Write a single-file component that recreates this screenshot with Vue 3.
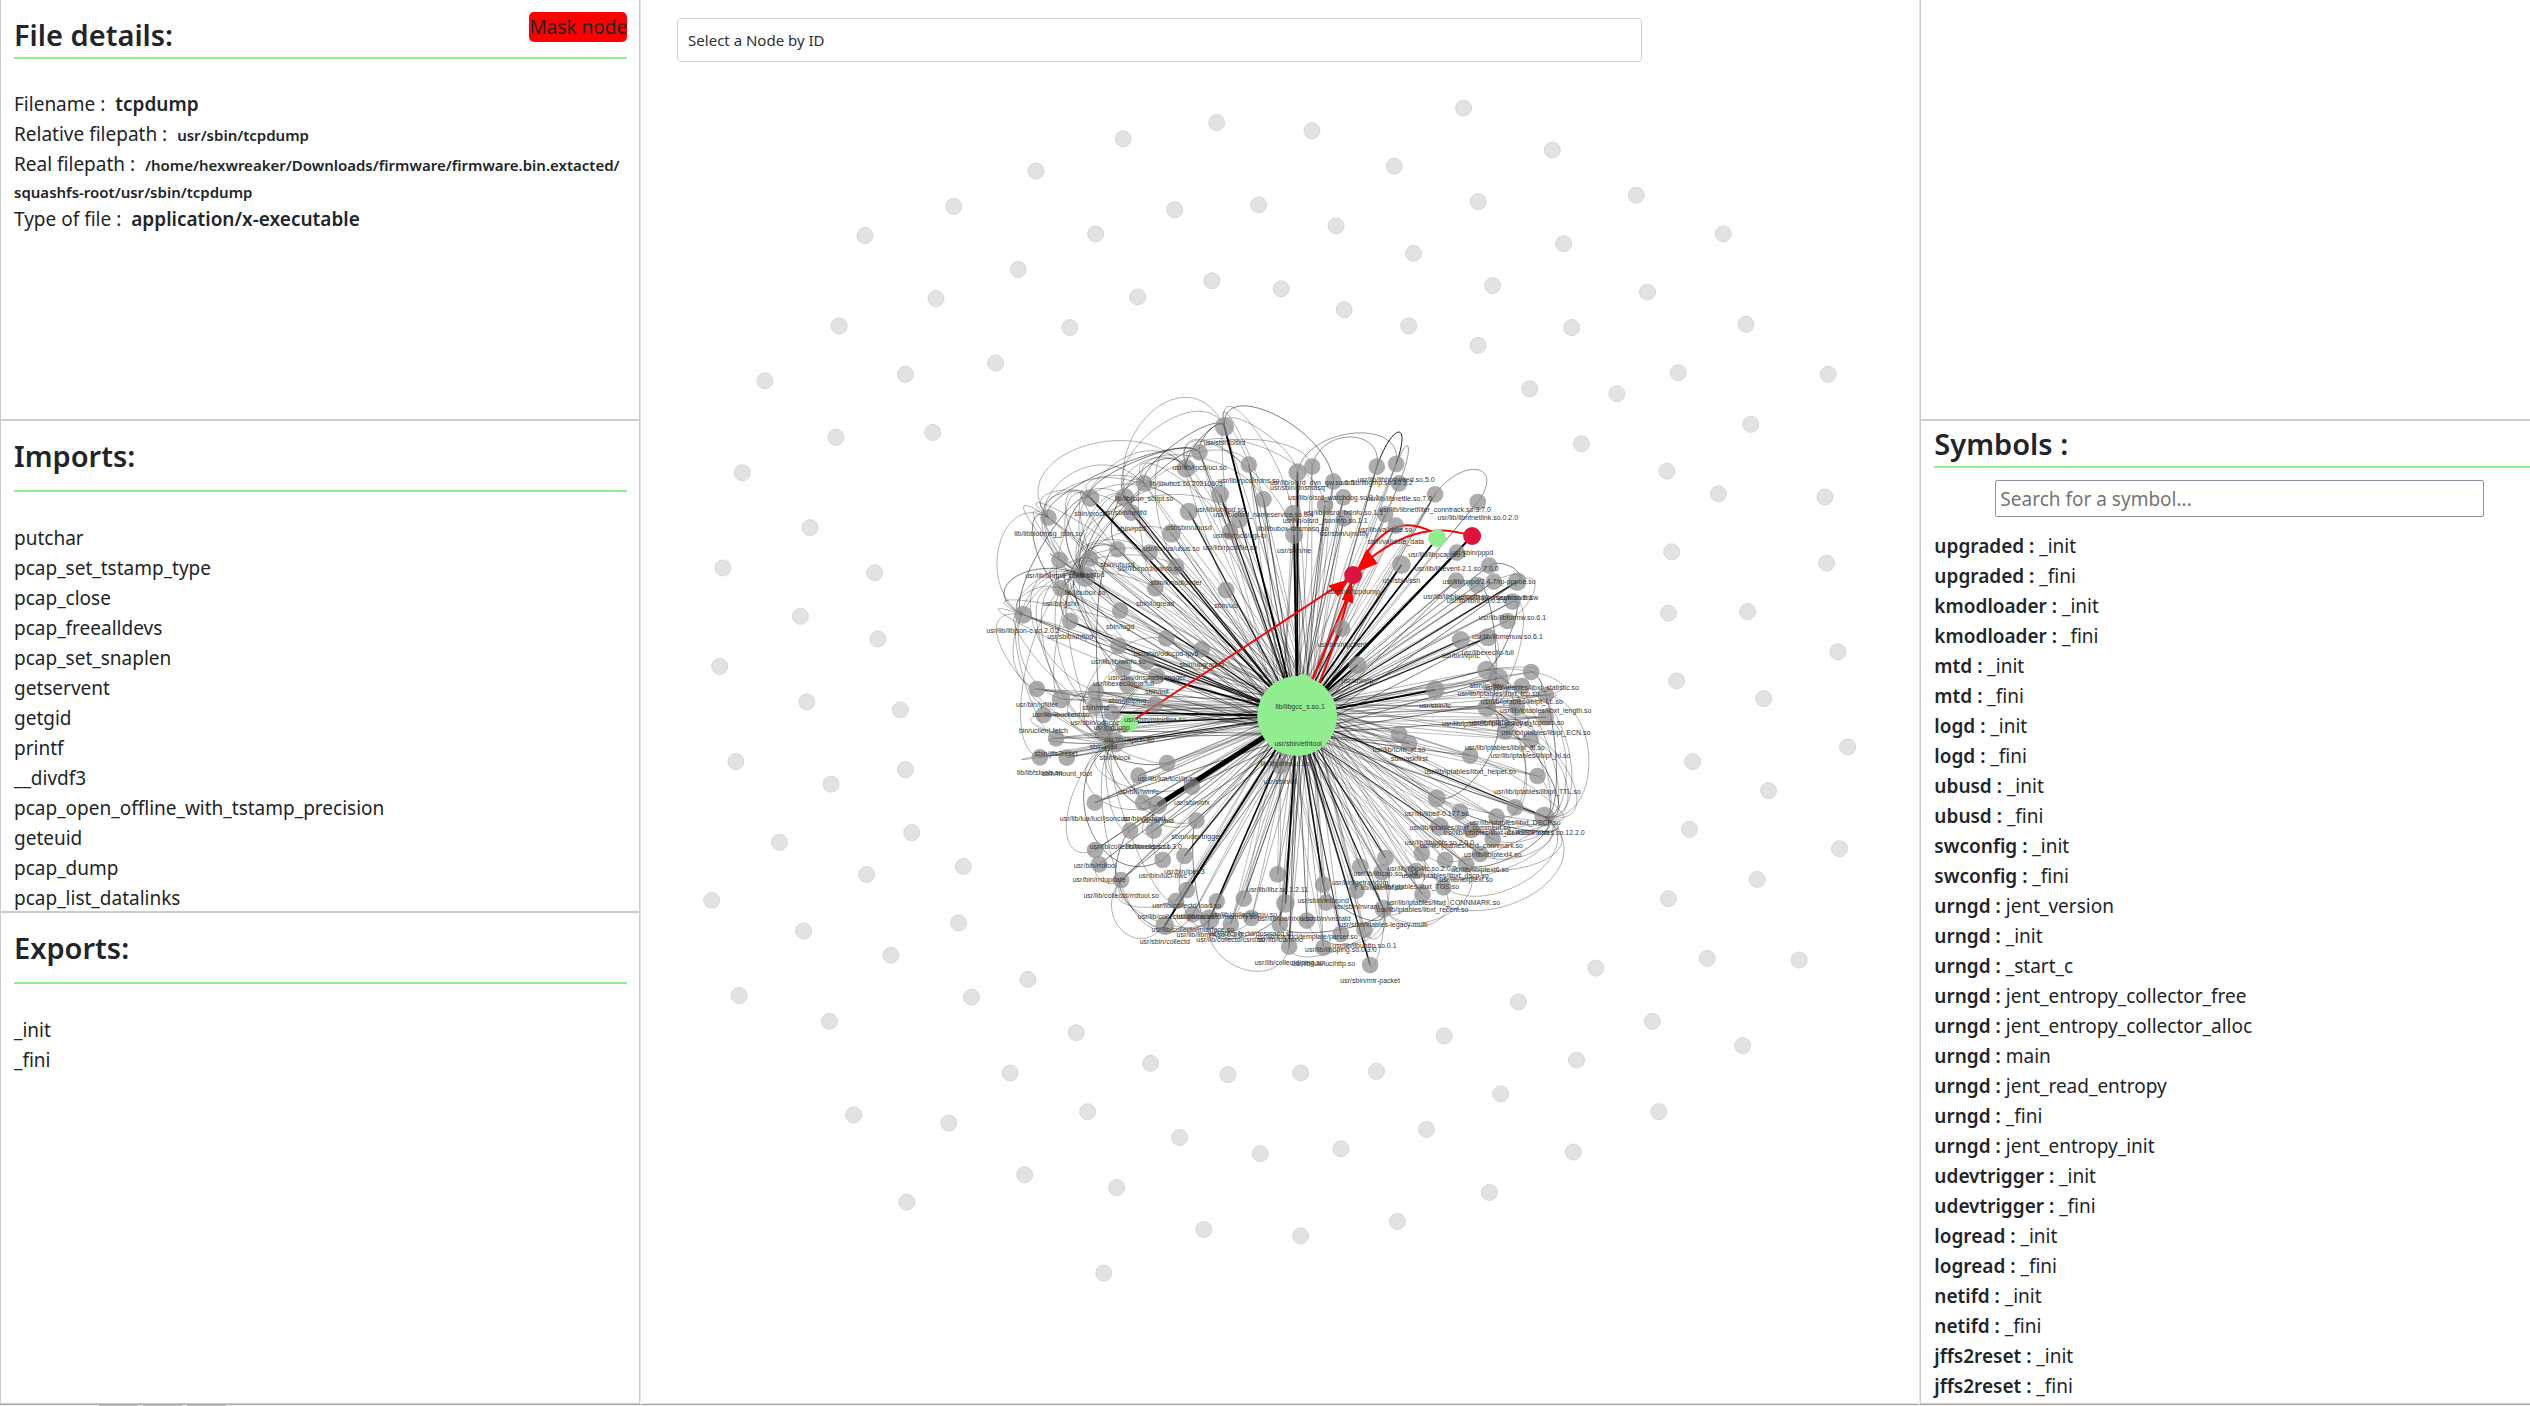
<script setup>
const imports = [
  'putchar', 'pcap_set_tstamp_type', 'pcap_close', 'pcap_freealldevs', 'pcap_set_snaplen',
  'getservent', 'getgid', 'printf', '__divdf3', 'pcap_open_offline_with_tstamp_precision',
  'geteuid', 'pcap_dump', 'pcap_list_datalinks',
]
const exportsList = ['_init', '_fini']

const symbols = [
  ['upgraded', ['_init', '_fini']],
  ['kmodloader', ['_init', '_fini']],
  ['mtd', ['_init', '_fini']],
  ['logd', ['_init', '_fini']],
  ['ubusd', ['_init', '_fini']],
  ['swconfig', ['_init', '_fini']],
  ['urngd', ['jent_version', '_init', '_start_c', 'jent_entropy_collector_free', 'jent_entropy_collector_alloc', 'main', 'jent_read_entropy', '_fini', 'jent_entropy_init']],
  ['udevtrigger', ['_init', '_fini']],
  ['logread', ['_init', '_fini']],
  ['netifd', ['_init', '_fini']],
  ['jffs2reset', ['_init', '_fini']],
].flatMap(([file, names]) => names.map((name) => ({ file, name })))

// Files without any link to the rest of the firmware
const isolated = [
  [754, 76], [696, 86], [813, 81], [907, 67], [962, 93], [864, 103], [642, 106], [591, 128], [536, 146],
  [728, 130], [780, 127], [828, 140], [916, 125], [1014, 121], [1068, 145], [969, 151], [876, 157], [679, 145],
  [631, 167], [580, 185], [751, 174], [705, 184], [794, 179], [833, 192], [925, 177], [1021, 181], [1082, 201],
  [873, 202], [520, 202], [663, 203], [916, 214], [974, 203], [617, 225], [561, 232], [474, 236], [948, 241],
  [1002, 244], [1040, 231], [1133, 232], [1085, 263], [980, 275], [578, 268], [518, 271], [460, 293], [1033, 292],
  [1131, 308], [502, 327], [1065, 306], [1036, 342], [1132, 349], [448, 352], [542, 355], [1034, 380], [1083, 379],
  [496, 382], [446, 413], [544, 396], [1139, 404], [1039, 422], [1093, 433], [500, 435], [558, 440], [1145, 463],
  [1049, 472], [1096, 490], [456, 472], [561, 477], [515, 486], [483, 522], [565, 516], [1047, 514], [1140, 526],
  [537, 542], [597, 537], [441, 558], [498, 577], [1034, 557], [1089, 545], [594, 572], [552, 592], [1058, 594],
  [1115, 595], [989, 600], [637, 607], [458, 617], [514, 633], [602, 618], [941, 621], [1024, 633], [895, 642],
  [667, 640], [1080, 648], [977, 657], [626, 665], [713, 659], [761, 666], [806, 665], [853, 664], [930, 678],
  [1028, 689], [529, 691], [674, 689], [588, 696], [884, 700], [731, 705], [831, 712], [781, 715], [975, 714],
  [635, 728], [692, 736], [562, 745], [923, 739], [866, 757], [746, 762], [806, 766], [684, 789],
].map(([x, y]) => ({ x: x * 1.6135, y: y * 1.6135 }))

// Linked files, grouped by cluster: [x, y, label, edge weight, radius]
const clusters = [
  {
    origin: [980, 390],
    nodes: [
      [733, 110, 'usr/sbin/olsrd', 4, 29], [658, 187, 'usr/lib/rpcd/uci.so', 2], [618, 235, 'lib/libubus.so.20210603', 1, 28],
      [806, 224, 'usr/lib/rpcd/rrdns.so', 1], [492, 280, 'lib/libjson_script.so', 1], [434, 322, 'usr/sbin/netifd', 3, 28],
      [331, 324, 'sbin/procd', 4, 27], [205, 383, 'lib/libblobmsg_json.so', 1], [720, 313, 'usr/lib/uhttpd.so', 3, 27],
      [850, 328, 'usr/lib/olsrd_nameservice.so.0.4', 1], [626, 365, 'usr/sbin/ubusd', 3, 27], [454, 368, 'sbin/rpcd', 3],
      [778, 390, 'usr/lib/rpcd/cgi-io', 2], [750, 425, 'usr/lib/rpcd/file.so', 1], [574, 430, 'usr/lib/lua/ubus.so', 2, 28],
      [412, 478, 'sbin/ubusd', 1], [508, 488, 'usr/lib/rpcd/iwinfo.so', 2], [238, 510, 'usr/lib/uhttpd_ubus.so', 1],
      [330, 506, 'sbin/ntpd', 1], [315, 560, 'lib/libubox.so', 3, 31], [588, 530, 'sbin/kmodloader', 2],
      [242, 595, 'usr/bin/jshn', 1], [525, 595, 'sbin/logread', 1], [738, 600, 'sbin/uci', 1],
      [129, 674, 'usr/lib/libjson-c.so.2.0.2', 2, 27], [270, 693, 'usr/sbin/uhttpd', 3], [420, 662, 'sbin/logd', 1],
      [558, 745, 'usr/sbin/odhcpd-ipv6', 1], [415, 768, 'usr/lib/libiwinfo.so', 3], [665, 778, 'sbin/upgraded', 1],
      [530, 858, 'sbin/init', 4], [500, 815, 'usr/sbin/dnsmasq-trigger', 3], [430, 835, 'usr/libexec/login.full', 2],
      [170, 897, 'usr/bin/ipfilter', 1],
    ],
  },
  {
    origin: [980, 680],
    nodes: [
      [243, 57, 'usr/lib/libuclient.so', 1, 28], [190, 105, 'bin/uclient-fetch', 1], [228, 175, 'sbin/jffs2reset', 1],
      [179, 232, 'lib/libfstools.so', 2], [260, 233, 'sbin/mount_root', 2], [347, 35, 'sbin/mtd', 1], [345, 80, 'usr/sbin/odhcpc', 1],
      [395, 97, 'usr/bin/lpgp', 4], [370, 152, 'sbin/ujail', 1], [405, 187, 'sbin/block', 3, 30], [525, 73, 'usr/sbin/minidlna.so', 1],
      [442, 15, 'sbin/hotplug', 1], [561, 249, 'usr/lib/lua/luci/ip.so', 1], [475, 287, 'usr/bin/iwinfo', 1],
      [635, 320, 'usr/sbin/nfx', 1], [489, 368, 'usr/bin/rpcapd', 1], [533, 375, 'usr/bin/lua', 10, 28],
      [344, 368, 'usr/lib/lua/luci/jsonc.so', 1], [649, 422, 'sbin/udevtrigger', 1], [450, 452, 'usr/lib/collectd/wireless.so', 1],
      [521, 452, 'lib/libuuid.so.1.3.0', 1], [345, 510, 'usr/bin/rrdtool', 1], [357, 553, 'usr/bin/rrdupdate', 1],
      [423, 600, 'usr/lib/collectd/rrdtool.so', 1], [548, 540, 'usr/bin/luci-bwc', 1], [613, 528, 'usr/bin/iperf3', 3],
      [620, 630, 'usr/lib/collectd/load.so', 3], [588, 663, 'usr/lib/collectd/uptime.so', 1], [710, 664, 'usr/lib/collectd/memory.so', 3],
      [791, 656, 'usr/lib/collectd/cpu.so', 1], [638, 703, 'usr/lib/collectd/interface.so', 1], [554, 737, 'usr/sbin/collectd', 4, 28],
      [688, 718, 'usr/lib/libmnl.so.0.2.0', 3, 30], [752, 733, 'usr/lib/collectd/csrd.so', 1], [814, 714, 'usr/lib/collectd/dnsmasq.so', 1],
      [899, 733, 'usr/lib/lua/nixio', 1], [916, 670, 'usr/lib/lua/nixio.so', 4, 28], [892, 583, 'usr/lib/libz.so.1.2.11', 1],
      [927, 800, 'usr/lib/collectd/ping.so', 2], [915, 205, 'lib/libpthread.so', 1], [900, 258, 'usr/sbin/cli', 1],
    ],
  },
  {
    origin: [1280, 390],
    nodes: [
      [52, 247, 'usr/sbin/dnsmasq', 5, 27], [96, 230, 'usr/lib/olsrd_dyn_gw.so.0.5', 1], [160, 275, 'usr/lib/olsrd_watchdog.so.0.1', 1],
      [290, 230, 'usr/lib/libgmp.so.10.3.2', 1], [348, 222, 'usr/lib/libhogweed.so.5.0', 1], [357, 280, 'usr/lib/libnettle.so.7.0', 1],
      [465, 313, 'usr/lib/libnetfilter_conntrack.so.3.7.0', 1], [593, 336, 'usr/lib/libnfnetlink.so.0.2.0', 1],
      [190, 322, 'usr/lib/olsrd_txtinfo.so.1.1', 2], [135, 345, 'usr/lib/olsrd_jsoninfo.so.1.1', 2], [38, 370, 'lib/libubox-dnsmasq.so', 1],
      [192, 385, 'usr/sbin/ujnotify', 2], [42, 435, 'usr/sbin/ne', 4, 27], [315, 373, 'usr/lib/validate.so', 1],
      [347, 407, 'sbin/validate_data', 1], [364, 524, 'usr/sbin/ssh', 4, 28], [530, 488, 'usr/lib/libevent-2.1.so.7.0.0', 4],
      [627, 527, 'usr/lib/pppd/2.4.7/rp-pppoe.so', 1], [528, 572, 'usr/lib/libbluetooth.so', 1], [590, 585, 'usr/lib/libnl.so.0.2.0', 1],
      [641, 575, 'usr/lib/libncursesw.so.6.1', 1], [711, 575, 'usr/bin/vlmsw', 3, 28], [697, 635, 'usr/lib/libformw.so.6.1', 1],
      [682, 693, 'usr/lib/libmenuw.so.6.1', 1], [623, 742, 'usr/libexec/ip-full', 3, 27], [542, 750, 'usr/bin/vpnc', 3, 27],
      [186, 716, 'usr/bin/ntpclient', 3], [232, 825, 'usr/sbin/ip', 4, 27], [619, 840, 'sbin/ip-tiny', 2, 28],
      [753, 846, 'usr/lib/iptables/libxt_statistic.so', 1], [655, 865, 'usr/lib/iptables/libxt_tcp.so', 1, 30], [465, 899, 'usr/sbin/tc', 4, 28],
    ],
  },
  {
    origin: [1280, 680],
    nodes: [
      [725, 18, 'usr/lib/iptables/libipt_LL.so', 1], [797, 45, 'usr/lib/iptables/libxt_length.so', 1],
      [620, 83, 'usr/lib/iptables/libxt_policy.so', 1, 28], [710, 82, 'usr/lib/iptables/libxt_tcpmss.so', 1],
      [797, 112, 'usr/lib/iptables/libipt_ECN.so', 1], [674, 155, 'usr/lib/iptables/libipt_ttl.so', 1],
      [751, 180, 'usr/lib/iptables/libipt_hl.so', 1], [570, 227, 'usr/lib/iptables/libxt_helper.so', 1],
      [772, 288, 'usr/lib/iptables/libipt_TTL.so', 1], [357, 162, 'usr/lib/tc/m_xt.so', 1], [387, 190, 'sbin/askfirst', 1],
      [470, 355, 'usr/lib/libelf-0.177.so', 2, 27], [705, 382, 'usr/lib/iptables/libxt_DSCP.so', 1],
      [793, 410, 'usr/lib/libxtables.so.12.2.0', 3, 30], [649, 410, 'usr/lib/iptables/libxt_CLASSIFY.so', 1],
      [540, 395, 'usr/lib/iptables/libxt_comment.so', 1], [478, 440, 'usr/lib/libip6tc.so.2.0.0', 1, 28],
      [574, 450, 'usr/lib/iptables/libxt_connmark.so', 1], [638, 478, 'usr/lib/libiptext4.so', 1], [600, 522, 'usr/lib/libiptext6.so', 1],
      [425, 520, 'usr/lib/libip4tc.so.2.0.0', 1], [495, 540, 'usr/lib/iptables/libxt_dscp.so', 1], [558, 553, 'usr/lib/libiptext.so', 1],
      [407, 573, 'usr/lib/iptables/libxt_TOS.so', 1], [490, 622, 'usr/lib/iptables/libxt_CONNMARK.so', 1],
      [427, 643, 'usr/lib/iptables/libxt_recent.so', 1], [316, 534, 'usr/lib/libcap.so.2.24', 3], [240, 560, 'usr/bin/getrandom', 1],
      [305, 577, 'lib/libsetlbf.so', 1], [229, 632, 'usr/sbin/nvram', 3], [129, 614, 'usr/sbin/micrond', 3], [138, 668, 'usr/sbin/vnstatd', 2],
      [310, 686, 'usr/sbin/xtables-legacy-multi', 3, 27], [80, 722, 'usr/lib/lua/luci/template/parser.so', 2],
      [182, 762, 'usr/lib/liboping.so.0.3.0', 2], [253, 750, 'usr/lib/libuhttp.so.0.1', 1], [130, 803, 'usr/lib/lua/lucihttp.so', 1],
      [270, 855, 'usr/sbin/mtr-packet', 3],
    ],
  },
]

const nodes = clusters.flatMap(({ origin, nodes: list }) =>
  list.map(([x, y, label, weight, r = 25]) => ({
    x: origin[0] + x / 3,
    y: origin[1] + y / 3,
    r: r / 3,
    label,
    weight,
  })),
)

const core = { x: 1297, y: 716 }
const selected = [
  { x: 1437, y: 538, r: 9, color: '#90ee90', label: 'usr/lib/libpcap.so.1' },
  { x: 1129, y: 723, r: 9, color: '#90ee90', label: 'usr/lib/libjson.so' },
  { x: 1472, y: 536, r: 9, color: '#dc143c', label: 'usr/sbin/pppd' },
  { x: 1353, y: 575, r: 9, color: '#dc143c', label: 'usr/sbin/tcpdump' },
]

const stroke = (weight) =>
  weight > 5 ? { w: 5, o: 1 } : weight > 3 ? { w: 1.8, o: 1 } : weight > 2 ? { w: 1.3, o: 0.85 } : weight > 1 ? { w: 1, o: 0.55 } : { w: 1, o: 0.3 }

// Every linked file depends on the core library; most carry a second, lighter link
const spokes = [
  ...nodes.map((n) => ({ d: `M${n.x} ${n.y}L${core.x} ${core.y}`, ...stroke(n.weight) })),
  ...nodes.map((n) => ({ d: `M${n.x} ${n.y}L${core.x + 14} ${core.y - 12}`, w: 1, o: 0.3 })),
  ...nodes.filter((n, i) => i % 2).map((n) => ({ d: `M${n.x} ${n.y}L${core.x - 16} ${core.y + 8}`, w: 1, o: 0.25 })),
  ...nodes.filter((n, i) => i % 3 === 0).map((n) => ({ d: `M${n.x} ${n.y}L${core.x + 4} ${core.y + 18}`, w: 1, o: 0.5 })),
  { d: `M1437 538L1300 716`, w: 1.8, o: 1 },
  { d: `M1472 536L1300 716`, w: 2, o: 1 },
  { d: `M1129 723L1297 716`, w: 1.3, o: 1 },
]

const find = (label) => nodes.find((n) => n.label === label)

// Curved links bow away from the core
function arc(a, b, bulge, o = 0.4, w = 1) {
  const mx = (a.x + b.x) / 2
  const my = (a.y + b.y) / 2
  const out = Math.hypot(mx - core.x, my - core.y) || 1
  const dist = Math.hypot(a.x - b.x, a.y - b.y)
  const k = (dist * bulge + 8) / out
  const dx = (mx - core.x) * k
  const dy = (my - core.y) * k
  return { d: `M${a.x} ${a.y}C${a.x + dx} ${a.y + dy} ${b.x + dx} ${b.y + dy} ${b.x} ${b.y}`, w, o }
}

function fan(hub, reach, bulge, step = 1) {
  return nodes
    .filter((n) => n !== hub && Math.hypot(n.x - hub.x, n.y - hub.y) < reach)
    .filter((n, i) => i % step === 0)
    .map((n, i) => arc(hub, n, bulge * (0.3 + (i % 5) * 0.3), i % 7 ? 0.3 : 0.5))
}

const curves = [
  ...fan(find('lib/libubox.so'), 130, 0.45),
  ...fan(find('lib/libubox.so'), 190, 0.35, 3),
  ...fan(find('usr/sbin/olsrd'), 130, 0.4, 2),
  ...fan(find('lib/libubus.so.20210603'), 150, 0.4, 2),
  ...fan(find('lib/libblobmsg_json.so'), 170, 0.4, 2),
  ...fan(find('lib/libjson_script.so'), 130, 0.4, 4),
  ...fan(find('usr/lib/libjson-c.so.2.0.2'), 150, 0.4, 4),
  ...fan(find('sbin/procd'), 130, 0.4, 3),
  ...fan(find('sbin/block'), 90, 0.5, 2),
  ...fan(find('sbin/block'), 200, 0.35, 3),
  ...fan(find('usr/bin/lua'), 80, 0.35, 2),
  ...fan(find('usr/lib/collectd/rrdtool.so'), 80, 0.5, 3),
  ...fan(find('usr/sbin/collectd'), 80, 0.4, 3),
  ...fan(find('usr/lib/libmnl.so.0.2.0'), 110, 0.4, 2),
  ...fan(find('usr/lib/libxtables.so.12.2.0'), 150, 0.35),
  ...fan(find('sbin/ip-tiny'), 80, 0.4, 2),
  ...fan(find('usr/lib/iptables/libxt_policy.so'), 130, 0.3, 3),
  ...fan(find('usr/sbin/xtables-legacy-multi'), 110, 0.35, 2),
  ...fan(find('usr/bin/vlmsw'), 50, 0.7, 2),
  arc(find('usr/lib/libnetfilter_conntrack.so.3.7.0'), find('usr/lib/libnfnetlink.so.0.2.0'), 0.9),
  arc(find('usr/lib/libnettle.so.7.0'), find('usr/lib/libhogweed.so.5.0'), 1.5),
  arc(find('usr/lib/libgmp.so.10.3.2'), find('usr/lib/libhogweed.so.5.0'), 2, 0.9),
  arc(find('usr/lib/olsrd_dyn_gw.so.0.5'), find('usr/lib/libgmp.so.10.3.2'), 0.5),
  arc(find('usr/sbin/dnsmasq'), find('usr/lib/libhogweed.so.5.0'), 0.4),
]
</script>

<template>
  <div class="page">
    <main class="workspace">
      <div class="column left">
        <section class="panel details">
          <button type="button" class="mask">Mask node</button>
          <h2>File details:</h2>
          <dl>
            <div><dt>Filename :</dt> <dd>tcpdump</dd></div>
            <div><dt>Relative filepath :</dt> <dd class="path">usr/sbin/tcpdump</dd></div>
            <div><dt>Real filepath :</dt> <dd class="path">/home/hexwreaker/Downloads/firmware/firmware.bin.extacted/<wbr>squashfs-root/usr/sbin/tcpdump</dd></div>
            <div><dt>Type of file :</dt> <dd>application/x-executable</dd></div>
          </dl>
        </section>
        <section class="panel listing">
          <h2>Imports:</h2>
          <ul><li v-for="name in imports" :key="name">{{ name }}</li></ul>
        </section>
        <section class="panel listing">
          <h2>Exports:</h2>
          <ul><li v-for="name in exportsList" :key="name">{{ name }}</li></ul>
        </section>
      </div>

      <section class="graph">
        <svg viewBox="641 0 1278 1403" role="img" aria-label="Dependency graph">
          <circle v-for="(n, i) in isolated" :key="'i' + i" class="lone" :cx="n.x" :cy="n.y" r="8" />
          <g class="edges">
            <path v-for="(e, i) in spokes" :key="'s' + i" :d="e.d" :stroke-width="e.w" :stroke-opacity="e.o" />
            <path v-for="(e, i) in curves" :key="'c' + i" :d="e.d" :stroke-width="e.w" :stroke-opacity="e.o" />
          </g>
          <g class="route">
            <path d="M1129 723L1340 584M1308 690L1350 590M1312 700Q1338 640 1350 590M1472 536C1440 525 1405 528 1362 565M1434 533C1405 517 1385 526 1364 556" />
            <path class="head" d="M1357 571L1367 551L1376 563ZM1347 581L1330 586L1338 595ZM1351 583L1343 599L1352 602Z" />
          </g>
          <circle v-for="(n, i) in nodes" :key="'n' + i" class="linked" :cx="n.x" :cy="n.y" :r="n.r" />
          <circle class="core" cx="1303" cy="683" r="9" />
          <circle class="core" :cx="core.x" :cy="core.y" r="40" />
          <circle v-for="n in selected" :key="n.label" :cx="n.x" :cy="n.y" :r="n.r" :fill="n.color" />
          <g class="labels">
            <text v-for="(n, i) in nodes" :key="'t' + i" :x="n.x" :y="n.y + 18">{{ n.label }}</text>
            <text v-for="n in selected" :key="n.label" :x="n.x" :y="n.y + 19">{{ n.label }}</text>
            <text x="1300" y="709">lib/libgcc_s.so.1</text>
            <text x="1298" y="746">usr/sbin/ethtool</text>
          </g>
        </svg>
        <select class="picker" aria-label="Select a Node by ID">
          <option>Select a Node by ID</option>
        </select>
      </section>

      <div class="column right">
        <section class="panel"></section>
        <section class="panel symbols">
          <h2>Symbols :</h2>
          <input type="search" placeholder="Search for a symbol..." aria-label="Search for a symbol" />
          <ul>
            <li v-for="(s, i) in symbols" :key="i"><b>{{ s.file }} :</b> {{ s.name }}</li>
          </ul>
        </section>
      </div>
    </main>
    <footer class="dock"><span></span><span></span><span></span></footer>
  </div>
</template>

<style>
body {
  margin: 0;
  background: #fff;
}
</style>

<style scoped>
* {
  box-sizing: border-box;
}
.page {
  display: flex;
  flex-direction: column;
  height: 100vh;
  overflow: hidden;
  color: #212529;
  font: 19px/30px "Noto Sans", sans-serif;
}
.workspace {
  flex: 1;
  min-height: 0;
  display: grid;
  grid-template-columns: 21fr 42fr 20fr;
}
.column {
  display: grid;
  min-width: 0;
  min-height: 0;
  border: 1px solid #ccc;
  border-top: 0;
}
.left {
  grid-template-rows: 23fr 27fr 27fr;
}
.right {
  grid-template-rows: 23fr 54fr;
  border-right: 0;
}
.panel {
  position: relative;
  min-height: 0;
  overflow: hidden;
  padding: 0 12px 0 13px;
}
.panel + .panel {
  border-top: 2px solid #ccc;
}
h2 {
  margin: 0;
  font-size: 29px;
  line-height: 34px;
  font-weight: 600;
  border-bottom: 2px solid #90ee90;
}
ul {
  margin: 0;
  padding: 0;
  list-style: none;
}
.details h2 {
  padding: 18px 0 5px;
}
.mask {
  position: absolute;
  top: 12px;
  right: 12px;
  padding: 0;
  border: 0;
  border-radius: 5px;
  background: #f00;
  color: inherit;
  font: inherit;
}
dl {
  margin: 30px 0 0;
  line-height: 24px;
}
dt,
dd {
  display: inline;
  margin: 0;
}
dt {
  margin-right: 5px;
  line-height: 30px;
}
dd {
  font-weight: 600;
}
.path {
  font-size: 15px;
}
.listing h2 {
  padding: 18px 0 17px;
}
.listing ul {
  padding-top: 31px;
}
.graph {
  position: relative;
  min-width: 0;
  min-height: 0;
  padding: 18px 36px;
  border: 1px solid #ddd;
  border-top: 0;
  border-radius: 0 0 5px 5px;
}
.graph svg {
  position: absolute;
  inset: 0;
  width: 100%;
  height: 100%;
}
.picker {
  position: relative;
  display: block;
  appearance: none;
  width: 80%;
  height: 44px;
  padding: 0 10px;
  border: 1px solid #d0d0d0;
  border-radius: 4px;
  background: #fff;
  color: #303030;
  font: 15px/24px "Noto Sans", sans-serif;
}
.lone {
  fill: #e2e2e2;
  stroke: #d8d8d8;
}
.edges path {
  fill: none;
  stroke: #000;
}
.route path {
  fill: none;
  stroke: #f00;
  stroke-width: 2;
}
.route .head {
  fill: #f00;
}
.linked {
  fill: #8c8c8c;
  fill-opacity: 0.72;
}
.core {
  fill: #90ee90;
}
.labels {
  fill: #343434;
  font: 7px "Liberation Sans", sans-serif;
  text-anchor: middle;
}
.symbols {
  padding-right: 0;
}
.symbols h2 {
  padding: 6px 0 5px;
}
.symbols input {
  display: block;
  appearance: none;
  width: 82%;
  height: 37px;
  margin: 12px auto 14px 61px;
  padding: 0 4px;
  border: 1px solid #8f8f9d;
  border-radius: 2px;
  background: #fff;
  color: inherit;
  font: inherit;
}
.symbols input::placeholder {
  color: #757575;
  opacity: 1;
}
.symbols b {
  font-weight: 600;
}
.dock {
  display: flex;
  gap: 5px;
  height: 2px;
  padding-left: 99px;
  border-top: 1px solid #aca6a1;
  background: #faf5f2;
}
.dock span {
  width: 39px;
  background: #c9c1be;
}
</style>
